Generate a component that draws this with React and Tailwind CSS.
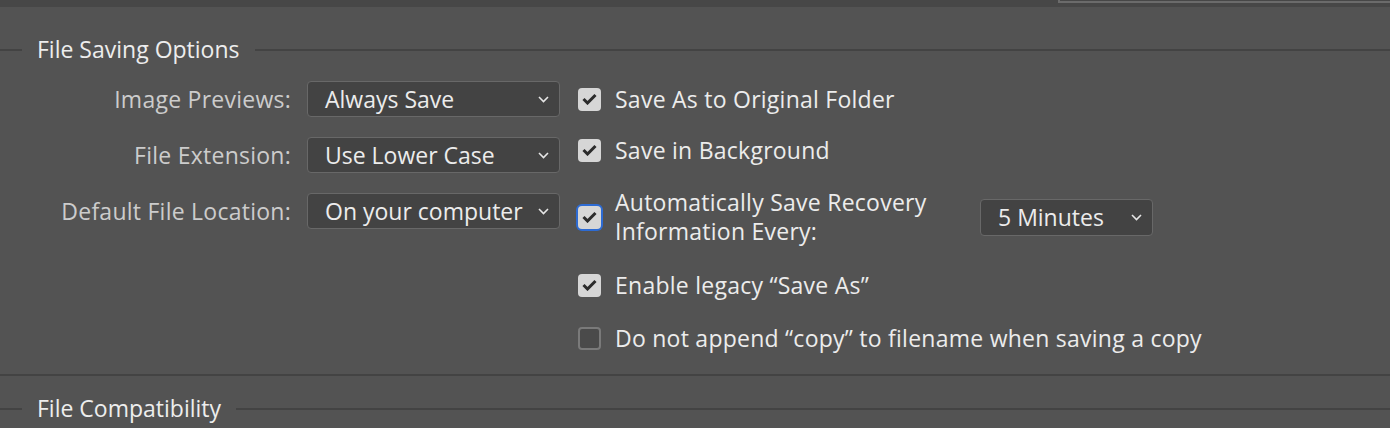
import React from "react";

const font = { fontFamily: '"Open Sans", "Noto Sans", sans-serif' };

function Chevron() {
  return (
    <svg width="11" height="7" viewBox="0 0 11 7" className="shrink-0">
      <path d="M1 1 L5.5 5.5 L10 1" fill="none" stroke="#e6e6e6" strokeWidth="1.6" />
    </svg>
  );
}

function Select({ value, className }) {
  return (
    <div
      className={
        "flex items-center justify-between rounded-[4px] border border-[#686868] bg-[#434343] pl-[17px] pr-[10px] text-[23px] text-[#ececec] " +
        className
      }
    >
      <span className="leading-none">{value}</span>
      <Chevron />
    </div>
  );
}

function Check({ checked, focus }) {
  if (!checked) {
    return (
      <div className="h-[23px] w-[23px] shrink-0 rounded-[4px] border-[2px] border-[#7a7a7a] bg-[#4a4a4a]" />
    );
  }
  return (
    <div
      className={
        "flex h-[23px] w-[23px] shrink-0 items-center justify-center rounded-[4px] bg-[#d6d6d6] " +
        (focus ? "ring-[2px] ring-[#2d6bd3]" : "")
      }
    >
      <svg width="15" height="12" viewBox="0 0 15 12">
        <path d="M1.5 6 L5.5 10 L13.5 2" fill="none" stroke="#2b2b2b" strokeWidth="3" />
      </svg>
    </div>
  );
}

function Heading({ title }) {
  return (
    <div className="flex items-center">
      <div className="h-[2px] w-[22px] bg-[#434343]" />
      <div className="px-[15px] text-[23px] leading-none text-[#ededed]">{title}</div>
      <div className="h-[2px] flex-1 bg-[#434343]" />
    </div>
  );
}

export default function App() {
  const left = [
    ["Image Previews:", "Always Save"],
    ["File Extension:", "Use Lower Case"],
    ["Default File Location:", "On your computer"],
  ];
  return (
    <div className="h-[428px] w-[1390px] overflow-hidden bg-[#535353]" style={font}>
      <div className="flex h-[7px] bg-[#474747]">
        <div className="flex-1" />
        <div className="h-[3px] w-[332px] border-b-[2px] border-l-[2px] border-[#6b6b6b]" />
      </div>
      <div className="pt-[31px]">
        <Heading title="File Saving Options" />
      </div>
      <div className="flex pt-[20px]">
        <div className="flex flex-col gap-[20px]">
          {left.map(([label, value]) => (
            <div key={label} className="flex items-center">
              <div className="w-[291px] text-right text-[23px] tracking-[0.25px] text-[#cccccc]">{label}</div>
              <Select value={value} className="ml-[16px] h-[36px] w-[253px]" />
            </div>
          ))}
        </div>
        <div className="ml-[18px] flex flex-col text-[23px] tracking-[0.25px] text-[#ececec]">
          <div className="flex h-[36px] items-center gap-[14px]">
            <Check checked />
            <span>Save As to Original Folder</span>
          </div>
          <div className="mt-[15px] flex h-[36px] items-center gap-[14px]">
            <Check checked />
            <span>Save in Background</span>
          </div>
          <div className="mt-[20px] flex h-[58px] items-center">
            <div className="flex w-[402px] items-center gap-[14px]">
              <Check checked focus />
              <span className="leading-[29px]">
                Automatically Save Recovery
                <br />
                Information Every:
              </span>
            </div>
            <Select value="5 Minutes" className="h-[37px] w-[173px] tracking-normal" />
          </div>
          <div className="mt-[21px] flex h-[36px] items-center gap-[14px]">
            <Check checked />
            <span>Enable legacy “Save As”</span>
          </div>
          <div className="mt-[17px] flex h-[36px] items-center gap-[14px]">
            <Check />
            <span>Do not append “copy” to filename when saving a copy</span>
          </div>
        </div>
      </div>
      <div className="mt-[18px] h-[2px] bg-[#434343]" />
      <div className="pt-[21px]">
        <Heading title="File Compatibility" />
      </div>
    </div>
  );
}
